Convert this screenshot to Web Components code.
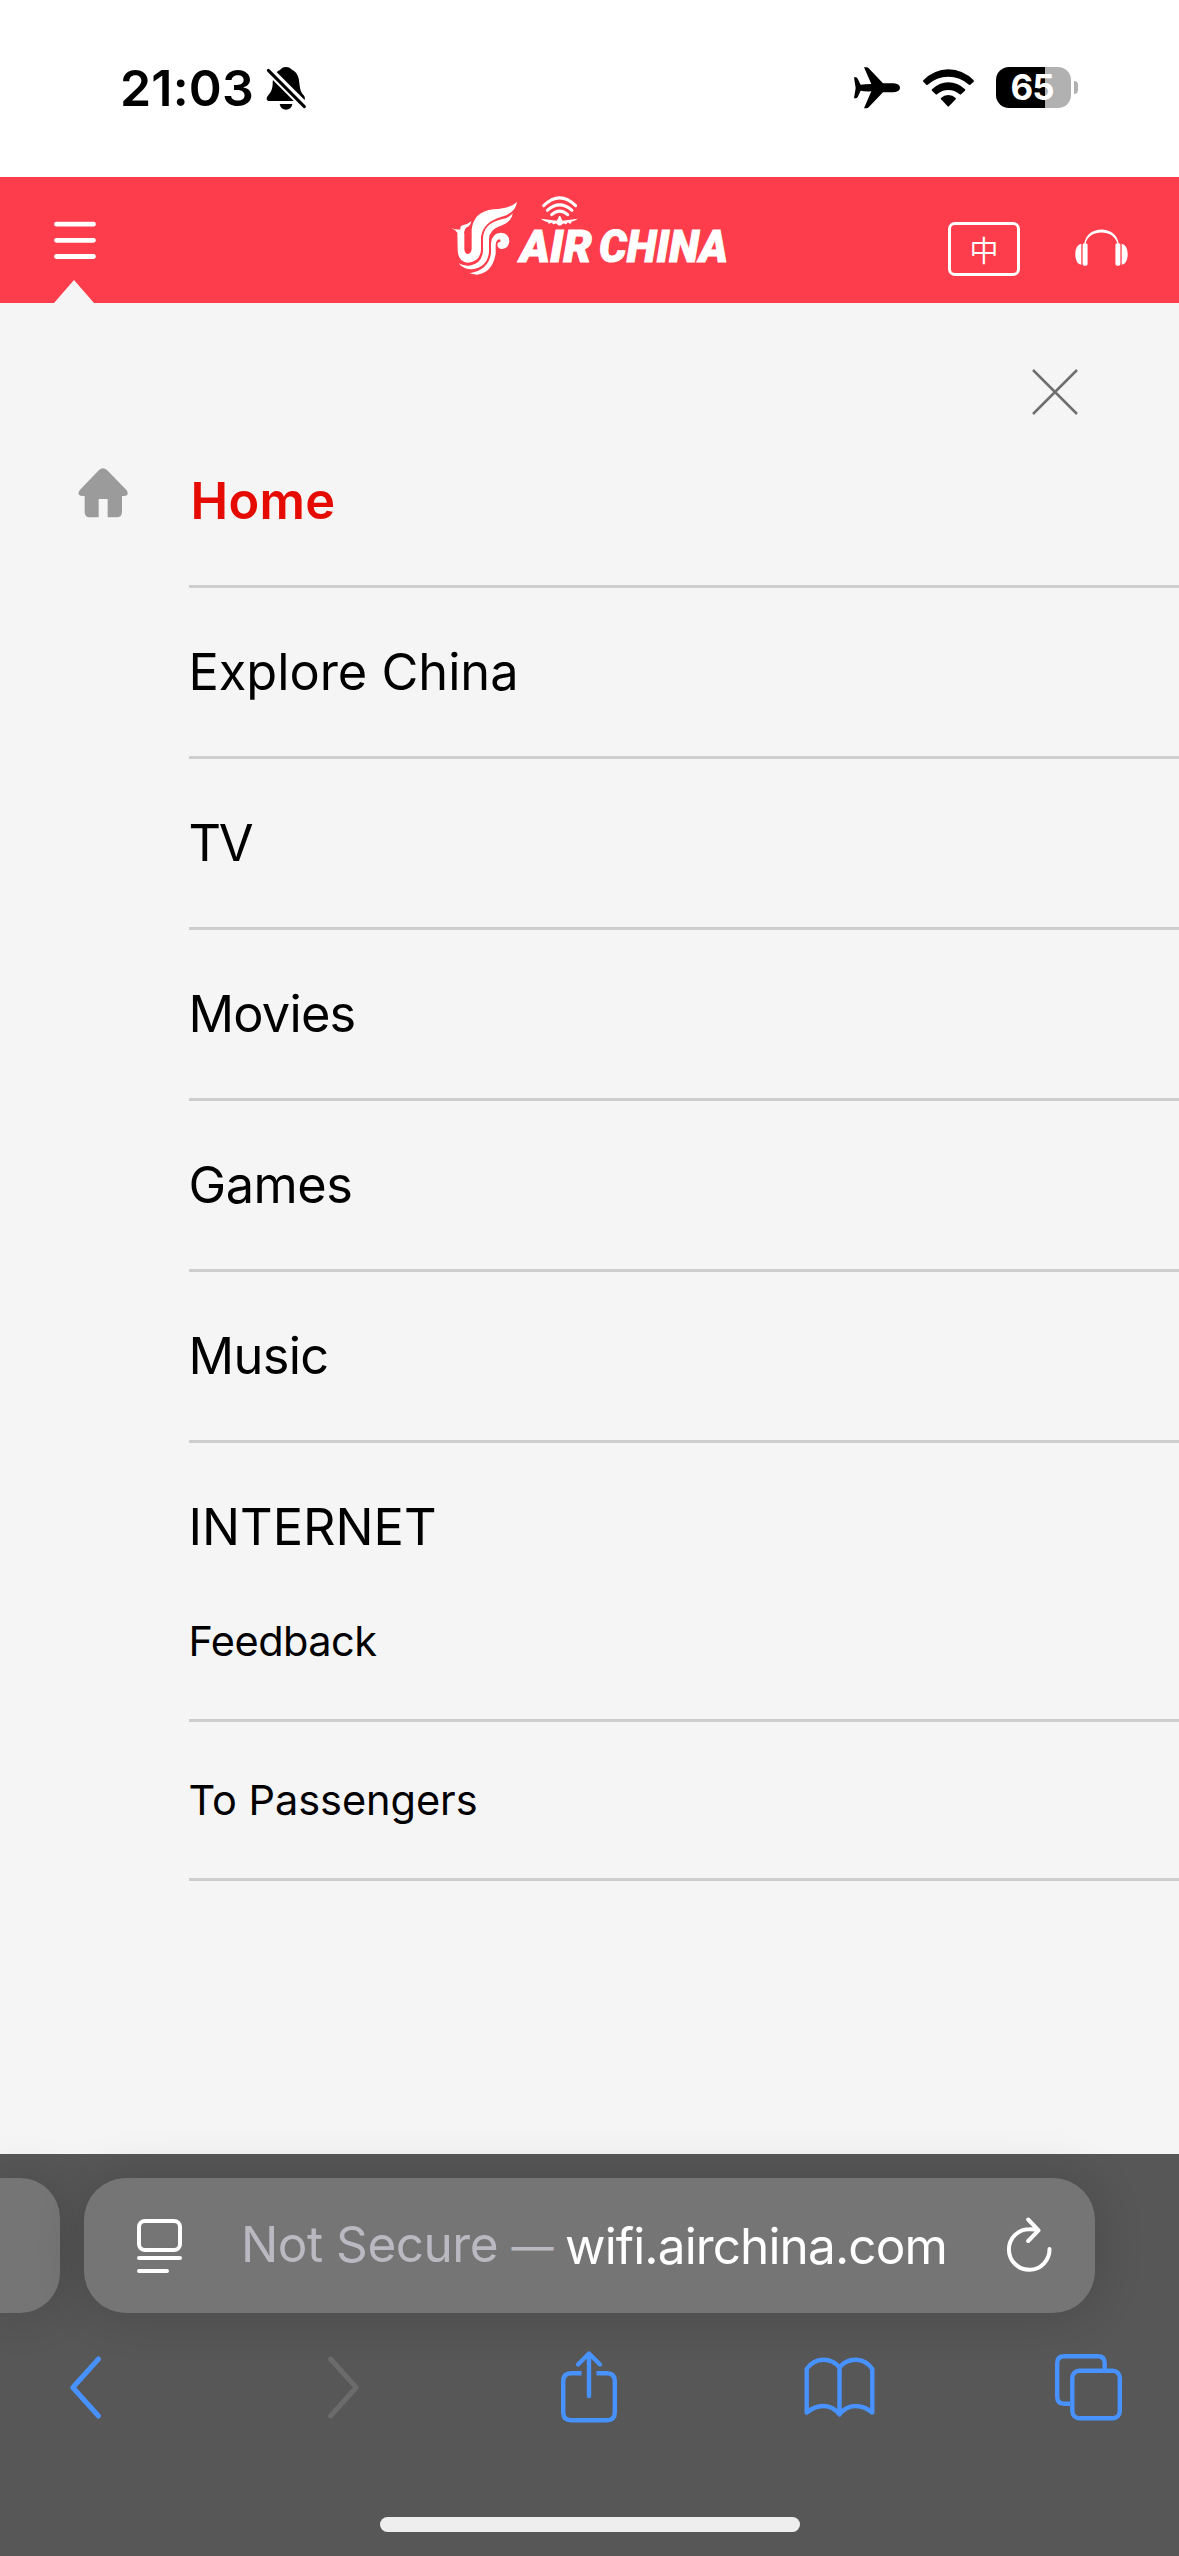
<!DOCTYPE html>
<html lang="en">
<head>
<meta charset="utf-8">
<title>Air China Wi-Fi</title>
<style>
  body {
    margin: 0;
    width: 1179px;
    height: 2556px;
    overflow: hidden;
    background: #f5f5f5;
    font-family: Inter, "Liberation Sans", "Noto Sans CJK SC", sans-serif;
    color: #000;
  }
  .dash { font-size: .85em; }
</style>
</head>
<body>
<phone-screen>
  <status-bar slot="status" time="21:03" battery="65"></status-bar>
  <site-header slot="header"></site-header>
  <side-menu slot="page">
    <menu-item icon="home" active fit="145">Home</menu-item>
    <menu-item fit="330">Explore China</menu-item>
    <menu-item fit="63">TV</menu-item>
    <menu-item fit="167">Movies</menu-item>
    <menu-item fit="164">Games</menu-item>
    <menu-item fit="140">Music</menu-item>
    <menu-item heading fit="248">INTERNET</menu-item>
    <menu-item small fit="188">Feedback</menu-item>
    <menu-item small fit="289">To Passengers</menu-item>
  </side-menu>
  <browser-bar slot="browser">
    <fit-text slot="security" width="312">Not Secure <span class="dash">—</span></fit-text>
    <fit-text slot="host" width="382">wifi.airchina.com</fit-text>
  </browser-bar>
</phone-screen>

<script>
// [width, height, viewBox, markup]
const ICONS = {
  bell: [40.7, 44, '498 78 122 132', `
    <path fill="currentColor" d="M558 81C568 81 572 86 577 90C592 98 597 112 598 130C600 150 603 157 611 166C616 172 617 183 607 183H508C499 183 498 175 503 168C512 158 517 150 518 132C518 110 526 96 540 90C545 85 549 81 558 81Z"/>
    <path fill="currentColor" d="M539 192h38c-2 11-9 17-19 17s-17-6-19-17Z"/>
    <path d="M502 86L617 201" stroke="#fff" stroke-width="25" fill="none"/>
    <path d="M505 91L613 200" stroke="currentColor" stroke-width="9" stroke-linecap="round"/>`],
  plane: [46, 41.7, '72 83 138 125', `
    <path fill="currentColor" d="M102 84h8q4 0 6 3L159 132H191Q210 134 210 145T191 159H159L116 204q-2 3-6 3h-8L124 156Q104 157 92 154L83 173q-2 4-6 4h-5L77 146L72 114h5q4 0 6 4L92 136Q104 134 124 134Z"/>`],
  wifi: [51, 38, '279 85 153 114', `
    <path fill="currentColor" d="M355 86Q399 87 431 119Q433 121 431 123L421 132Q419 134 417 132Q390 108 355 108T293 132Q291 134 289 132L280 123Q278 121 280 119Q312 87 355 86ZM355 125Q383 125 405 146Q407 148 405 150L393 161Q391 163 389 161Q374 148 355 148T321 161Q319 163 317 161L306 150Q304 148 306 146Q328 125 355 125ZM355 163Q368 163 377 172Q379 174 377 176L357 197Q355 199 353 197L333 176Q331 174 333 172Q342 163 355 163Z"/>`],
  menu: [42, 38, '0 0 42 38', `
    <path d="M2.500 2.200H39.500M2.500 18.300H39.500M2.500 34.500H39.500" stroke="currentColor" stroke-width="4.800" stroke-linecap="round"/>`],
  headphones: [53, 37, '463 116 160 110', `
    <path fill="currentColor" d="M491 160C498 103 588 103 595 160H591C582 115 503 115 495 160Z"/>
    <rect x="486" y="158" width="15" height="67" rx="5" fill="currentColor"/>
    <rect x="585" y="158" width="15" height="67" rx="5" fill="currentColor"/>
    <path fill="currentColor" d="M482 160V222C470 221 464 207 464 191S470 162 482 160ZM604 160V222C616 221 622 207 622 191S616 162 604 160Z"/>`],
  close: [46, 46, '0 0 46 46', `
    <path d="M1 1L45 45M45 1L1 45" stroke="#6e6e6e" stroke-width="2.500" fill="none"/>`],
  home: [50, 50, '84 84 150 150', `
    <path fill="#9b9b9b" d="M147 90Q159 80 171 90L230 151Q235 158 232 164Q229 168 222 168H216V216Q216 232 200 232H173V177H146V232H119Q104 232 104 216V168H96Q88 168 86 163Q84 157 89 151Z"/>`],
  page: [45, 54, '0 0 45 54', `
    <rect x="2" y="2" width="41" height="29" rx="6" fill="none" stroke="currentColor" stroke-width="4"/>
    <path d="M2 39H43M2 52H30" stroke="currentColor" stroke-width="4" stroke-linecap="round"/>`],
  reload: [45, 54, '0 0 45 54', `
    <path d="M42.500 32A20.300 20.300 0 1 1 22.200 12.200Q27 12 31 13.300M21.200 2.500L31.500 13.300L21.200 24" fill="none" stroke="currentColor" stroke-width="4" stroke-linecap="round" stroke-linejoin="round"/>`],
  back: [31, 63, '0 0 31 63', `
    <path d="M28.500 3L2.800 31.500L28.500 60" fill="none" stroke="currentColor" stroke-width="5" stroke-linecap="round" stroke-linejoin="round"/>`],
  forward: [31, 63, '0 0 31 63', `
    <path d="M2.500 3L28.200 31.500L2.500 60" fill="none" stroke="#6b6b6b" stroke-width="5" stroke-linecap="round" stroke-linejoin="round"/>`],
  share: [56, 72, '0 0 56 72', `
    <path d="M20.500 22.200H10.200Q2.200 22.200 2.200 30.200V61.200Q2.200 69.200 10.200 69.200H45.800Q53.800 69.200 53.800 61.200V30.200Q53.800 22.200 45.800 22.200H35.500" fill="none" stroke="currentColor" stroke-width="4.400"/>
    <path d="M28 45V2.500M17 13.500L28 2.500L39 13.500" fill="none" stroke="currentColor" stroke-width="4.400" stroke-linecap="round" stroke-linejoin="round"/>`],
  book: [71, 60, '0 0 71 60', `
    <path d="M35.500 10.500V57.500C27 46 13 47 2.700 55.500V12C11 0 27 0 35.500 10.500C44 0 60 0 68.300 12V55.500C58 47 44 46 35.500 57.500" fill="none" stroke="currentColor" stroke-width="4.400" stroke-linecap="round" stroke-linejoin="round"/>`],
  tabs: [67, 67, '0 0 67 67', `
    <path d="M15 49.700H9.200Q2.200 49.700 2.200 42.700V9.200Q2.200 2.200 9.200 2.200H42.700Q49.700 2.200 49.700 9.200V15" fill="none" stroke="currentColor" stroke-width="4.400"/>
    <rect x="17.300" y="16.800" width="47.500" height="47.500" rx="7" fill="none" stroke="currentColor" stroke-width="4.400"/>`],
  logo: [320, 110, '0 0 960 330', `
    <g fill="currentColor">
      <path d="M64 144Q80 150 92 148Q88 140 98 136Q112 134 124 124Q122 138 110 142Q100 150 103 162V208Q104 222 114 222Q125 220 125 205V150Q130 95 190 88Q240 86 261 66Q256 100 215 110Q160 125 153 170V210Q150 246 112 248Q84 245 83 210L82 158Q78 150 64 144Z"/>
      <path d="M248 100Q245 128 205 140Q180 150 177 175V215Q173 262 125 268Q100 268 86 250Q100 258 118 257Q156 252 159 212V175Q161 130 215 118Q240 112 248 100Z"/>
      <path d="M183 190Q186 158 213 158Q238 160 238 184Q236 206 216 207Q203 206 202 194Q202 186 210 186Q214 180 208 178Q199 179 197 194V222Q186 280 140 284L118 280Q176 270 183 220Z"/>
      <path d="M333 116L380 122Q384 118 387 108H391Q394 118 398 122L443 116Q438 124 398 131Q389 143 380 131Q340 126 333 116Z"/>
      <circle cx="358" cy="127" r="4"/><circle cx="371" cy="129" r="4"/>
      <circle cx="407" cy="129" r="4"/><circle cx="420" cy="127" r="4"/>
    </g>
    <path d="M341 77Q389 30 437 77M352 91Q389 58 426 91M365 104Q389 83 413 104" fill="none" stroke="currentColor" stroke-width="9" stroke-linecap="round"/>
    <g fill="currentColor" stroke="currentColor" stroke-width="3" font-family="Roboto, Liberation Sans, sans-serif" font-weight="900" font-style="italic" font-size="133">
      <text x="270" y="245" textLength="216" lengthAdjust="spacingAndGlyphs">AIR</text>
      <text x="507" y="245" textLength="387" lengthAdjust="spacingAndGlyphs">CHINA</text>
    </g>`]
};

class UiIcon extends HTMLElement {
  constructor() {
    super();
    this.attachShadow({ mode: 'open' });
  }

  connectedCallback() {
    const [width, height, viewBox, markup] = ICONS[this.getAttribute('name')];
    this.shadowRoot.innerHTML = `
      <style>
        :host { display: block; flex: none; width: ${width}px; height: ${height}px; }
        svg { display: block; width: 100%; height: 100%; overflow: visible; }
      </style>
      <svg viewBox="${viewBox}" preserveAspectRatio="none">${markup}</svg>
    `;
  }
}

// Spreads the letter spacing so that the line takes the given width
class FitText extends HTMLElement {
  constructor() {
    super();
    this.attachShadow({ mode: 'open' });
    this.shadowRoot.innerHTML = `
      <style>
        :host { display: block; white-space: nowrap; }
        span { display: inline-block; }
      </style>
      <span><slot></slot></span>
    `;
  }

  connectedCallback() {
    const width = Number(this.getAttribute('width'));
    const span = this.shadowRoot.querySelector('span');
    const natural = span.getBoundingClientRect().width;
    if (!width || !natural) return;
    span.style.letterSpacing = `${(width - natural) / this.textContent.length}px`;
  }
}

class PhoneScreen extends HTMLElement {
  constructor() {
    super();
    this.attachShadow({ mode: 'open' });
    this.shadowRoot.innerHTML = `
      <style>
        :host { display: flex; flex-direction: column; width: 1179px; height: 2556px; }
        .page { flex: 1; min-height: 0; }
      </style>
      <slot name="status"></slot>
      <slot name="header"></slot>
      <div class="page"><slot name="page"></slot></div>
      <slot name="browser"></slot>
    `;
  }
}

class StatusBar extends HTMLElement {
  constructor() {
    super();
    this.attachShadow({ mode: 'open' });
  }

  connectedCallback() {
    const time = this.getAttribute('time');
    const battery = this.getAttribute('battery');
    this.shadowRoot.innerHTML = `
      <style>
        :host {
          display: flex;
          align-items: center;
          box-sizing: border-box;
          height: 177px;
          padding: 0 101px 2px 120px;
          background: #fff;
        }
        .time { font-size: 50px; font-weight: 600; line-height: 60px; }
        .bell { margin-left: 12px; }
        .right { display: flex; align-items: center; margin-left: auto; }
        .wifi { margin-left: 23px; }
        .battery {
          display: flex;
          align-items: center;
          justify-content: center;
          box-sizing: border-box;
          width: 75px;
          height: 41px;
          margin-left: 22px;
          padding-right: 3px;
          border-radius: 13px;
          background: linear-gradient(to right, #000 ${battery}%, #b1b1b1 ${battery}%);
          color: #fff;
          font-size: 35px;
          font-weight: 700;
          line-height: 41px;
          letter-spacing: -1px;
        }
        .nub { width: 4px; height: 13px; margin-left: 3px; border-radius: 0 5px 5px 0; background: #b1b1b1; }
      </style>
      <fit-text class="time" width="134">${time}</fit-text>
      <ui-icon class="bell" name="bell"></ui-icon>
      <div class="right">
        <ui-icon name="plane"></ui-icon>
        <ui-icon class="wifi" name="wifi"></ui-icon>
        <div class="battery">${battery}</div>
        <div class="nub"></div>
      </div>
    `;
  }
}

class SiteHeader extends HTMLElement {
  constructor() {
    super();
    this.attachShadow({ mode: 'open' });
    this.shadowRoot.innerHTML = `
      <style>
        :host {
          display: grid;
          grid-template-columns: 430px 320px 1fr;
          height: 126px;
          background: #fd3d4b;
          color: #fff;
        }
        .left { display: flex; flex-direction: column; justify-content: space-between; padding: 45px 0 0 54px; }
        .arrow { width: 40px; height: 23px; background: #f5f5f5; clip-path: polygon(50% 0, 100% 100%, 0 100%); }
        .logo { margin-top: 3px; }
        .right { display: flex; align-items: flex-start; justify-content: flex-end; padding: 45px 51px 0 0; }
        .lang {
          box-sizing: border-box;
          width: 72px;
          height: 54px;
          border: 3px solid #fff;
          border-radius: 7px;
          font: 350 29px/48px "Noto Sans CJK SC", sans-serif;
          text-align: center;
        }
        .phones { margin: 7px 0 0 55px; }
      </style>
      <div class="left">
        <ui-icon name="menu"></ui-icon>
        <div class="arrow"></div>
      </div>
      <ui-icon class="logo" name="logo"></ui-icon>
      <div class="right">
        <div class="lang">中</div>
        <ui-icon class="phones" name="headphones"></ui-icon>
      </div>
    `;
  }
}

class SideMenu extends HTMLElement {
  constructor() {
    super();
    this.attachShadow({ mode: 'open' });
    this.shadowRoot.innerHTML = `
      <style>
        :host { display: block; }
        .top { display: flex; justify-content: flex-end; height: 48px; padding: 66px 101.500px 0 0; }
      </style>
      <div class="top"><ui-icon name="close"></ui-icon></div>
      <slot></slot>
    `;
  }
}

class MenuItem extends HTMLElement {
  constructor() {
    super();
    this.attachShadow({ mode: 'open' });
  }

  connectedCallback() {
    const icon = this.getAttribute('icon');
    this.shadowRoot.innerHTML = `
      <style>
        :host { display: grid; grid-template-columns: 189px 1fr; font-size: 50.500px; line-height: 168px; }
        .icon { padding: 51px 0 0 78px; }
        .label { height: 168px; border-bottom: 3px solid #cecece; }
        fit-text { margin-left: -.5px; }
        :host([active]) .label { color: #e60b00; font-weight: 600; }
        :host([active]) fit-text { margin-left: 1.500px; }
        :host([heading]) .label { height: 120px; border: 0; }
        :host([small]) { font-size: 41.500px; line-height: 156px; }
        :host([small]) .label { height: 156px; }
      </style>
      <div class="icon">${icon ? `<ui-icon name="${icon}"></ui-icon>` : ''}</div>
      <div class="label"><fit-text width="${this.getAttribute('fit')}">${this.textContent}</fit-text></div>
    `;
  }
}

class BrowserBar extends HTMLElement {
  constructor() {
    super();
    this.attachShadow({ mode: 'open' });
    this.shadowRoot.innerHTML = `
      <style>
        :host { display: flex; flex-direction: column; height: 402px; background: #575757; color: #fff; }
        .tabs { display: flex; gap: 24px; padding-top: 24px; }
        .pill {
          box-sizing: border-box;
          height: 135px;
          background: #757575;
          box-shadow: 0 0 50px rgba(0, 0, 0, .16);
        }
        .previous { width: 60px; border-radius: 0 40px 40px 0; }
        .address {
          display: flex;
          align-items: center;
          width: 1011px;
          padding: 0 43px 0 53px;
          border-radius: 42px;
          font-size: 49.500px;
          line-height: 60px;
        }
        .security { width: 312px; margin-left: 59px; color: #bab9c2; }
        .host { margin-left: 12px; }
        .reload { margin: 0 0 4px auto; }
        .tools { display: flex; align-items: center; height: 72px; padding: 38px 57px 0 70px; color: #4892ff; }
        .forward { margin-left: 227px; }
        .share { margin-left: 202px; }
        .book { margin-left: 187px; }
        .all { margin-left: 180px; }
        .indicator { width: 420px; height: 15px; margin: 94px auto 0; border-radius: 8px; background: #eee; }
      </style>
      <div class="tabs">
        <div class="pill previous"></div>
        <div class="pill address">
          <ui-icon name="page"></ui-icon>
          <div class="security"><slot name="security"></slot></div>
          <div class="host"><slot name="host"></slot></div>
          <ui-icon class="reload" name="reload"></ui-icon>
        </div>
      </div>
      <div class="tools">
        <ui-icon name="back"></ui-icon>
        <ui-icon class="forward" name="forward"></ui-icon>
        <ui-icon class="share" name="share"></ui-icon>
        <ui-icon class="book" name="book"></ui-icon>
        <ui-icon class="all" name="tabs"></ui-icon>
      </div>
      <div class="indicator"></div>
    `;
  }
}

// Parents first: their slots have to be in place when the texts are measured
customElements.define('phone-screen', PhoneScreen);
customElements.define('browser-bar', BrowserBar);
customElements.define('side-menu', SideMenu);
customElements.define('site-header', SiteHeader);
customElements.define('status-bar', StatusBar);
customElements.define('menu-item', MenuItem);
customElements.define('ui-icon', UiIcon);
customElements.define('fit-text', FitText);
</script>
</body>
</html>
